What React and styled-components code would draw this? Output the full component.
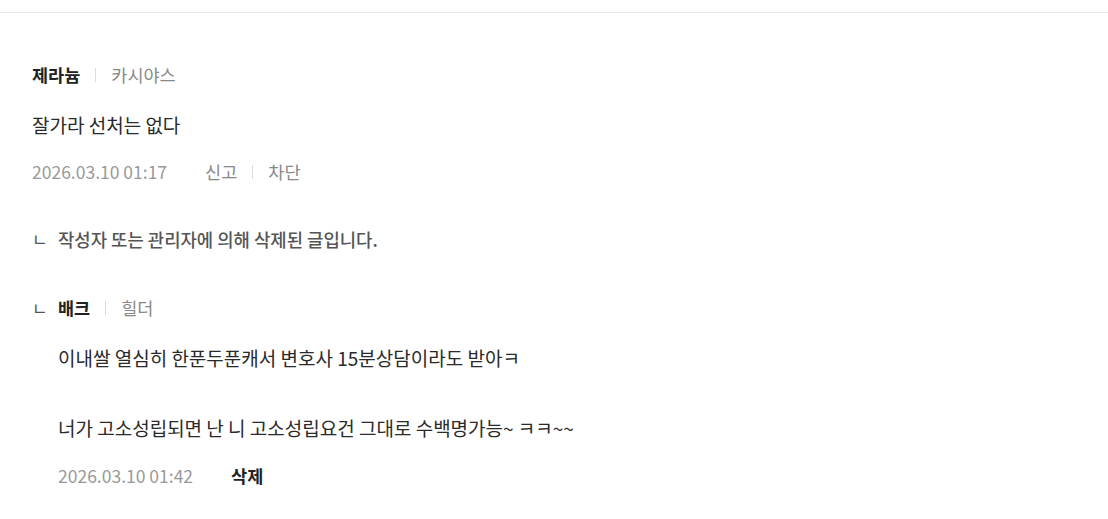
import React from 'react';
import styled, { createGlobalStyle } from 'styled-components';

const GlobalStyle = createGlobalStyle`
  body {
    margin: 0;
    background: #fff;
    font-family: "Noto Sans CJK KR", "Noto Sans", sans-serif;
    color: #222;
  }
`;

const Page = styled.div`
  border-top: 1px solid #e8e8e8;
  margin-top: 12px;
  padding: 49px 32px 0;
`;

const Comment = styled.div`
  display: flex;
  flex-direction: column;
`;

const NameRow = styled.div`
  display: flex;
  align-items: center;
  font-size: 17.5px;
  line-height: 26px;
`;

const Nick = styled.span`
  font-weight: 700;
  color: #222;
`;

const Sep = styled.span`
  width: 1px;
  height: 14px;
  background: #ddd;
  margin: 0 15px;
`;

const SubNick = styled.span`
  color: #888;
`;

const Body = styled.div`
  font-size: 19px;
  line-height: 26px;
  margin-top: 24px;
  color: #2a2a2a;
  white-space: pre-line;
`;

const Meta = styled.div`
  display: flex;
  align-items: center;
  font-size: 17.5px;
  line-height: 24px;
  margin-top: 22px;
  color: #999;
`;

const Date = styled.span`
  margin-right: 38px;
`;

const Action = styled.span`
  color: ${(p) => (p.$strong ? '#222' : '#888')};
  font-weight: ${(p) => (p.$strong ? 700 : 400)};
  cursor: pointer;
`;

const Reply = styled.div`
  display: flex;
  margin-top: ${(p) => p.$gap}px;
`;

const Arrow = styled.span`
  width: 26px;
  flex-shrink: 0;
  font-size: 17px;
  line-height: 26px;
  color: #555;
`;

const Deleted = styled.div`
  font-size: 17.8px;
  line-height: 26px;
  font-weight: 500;
  color: #555;
`;

const ReplyBody = styled(Body)`
  line-height: 35px;
  margin-top: 19px;
`;

const ReplyMeta = styled(Meta)`
  margin-top: 19px;
`;

export default function App() {
  return (
    <>
      <GlobalStyle />
      <Page>
        <Comment>
          <NameRow>
            <Nick>제라늄</Nick>
            <Sep />
            <SubNick>카시야스</SubNick>
          </NameRow>
          <Body>잘가라 선처는 없다</Body>
          <Meta>
            <Date>2026.03.10 01:17</Date>
            <Action>신고</Action>
            <Sep />
            <Action>차단</Action>
          </Meta>
        </Comment>

        <Reply $gap={42}>
          <Arrow>ㄴ</Arrow>
          <Deleted>작성자 또는 관리자에 의해 삭제된 글입니다.</Deleted>
        </Reply>

        <Reply $gap={43}>
          <Arrow>ㄴ</Arrow>
          <Comment>
            <NameRow>
              <Nick>배크</Nick>
              <Sep />
              <SubNick>힐더</SubNick>
            </NameRow>
            <ReplyBody>
              {'이내쌀 열심히 한푼두푼캐서 변호사 15분상담이라도 받아ㅋ\n\n너가 고소성립되면 난 니 고소성립요건 그대로 수백명가능~ ㅋㅋ~~'}
            </ReplyBody>
            <ReplyMeta>
              <Date>2026.03.10 01:42</Date>
              <Action $strong>삭제</Action>
            </ReplyMeta>
          </Comment>
        </Reply>
      </Page>
    </>
  );
}
